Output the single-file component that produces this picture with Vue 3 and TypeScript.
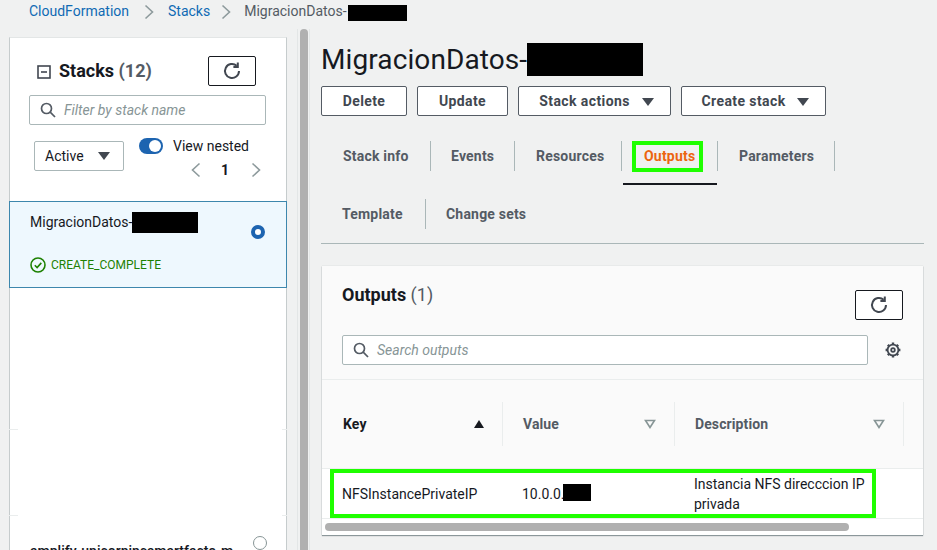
<script setup lang="ts">
const tabsTop = [
  { name: 'Stack info', w: 110, pad: 22 },
  { name: 'Events', w: 84, pad: 20 },
  { name: 'Resources', w: 107, pad: 21 },
  { name: 'Outputs', w: 96, pad: 22, active: true },
  { name: 'Parameters', w: 117, pad: 21 },
]
const tabsBottom = [
  { name: 'Template', w: 105, pad: 21 },
  { name: 'Change sets', w: 110, pad: 20, last: true },
]
</script>

<template>
  <div class="page">
    <nav class="crumbs">
      <a>CloudFormation</a>
      <svg class="chev" viewBox="0 0 10 16"><path d="M1.5 1.5 8.5 8l-7 6.500" /></svg>
      <a>Stacks</a>
      <svg class="chev chev-two" viewBox="0 0 10 16"><path d="M1.500 1.500 8.500 8l-7 6.500" /></svg>
      <span class="crumb-now">MigracionDatos-</span><i class="redact crumb-redact"></i>
    </nav>

    <div class="main">
      <aside class="side">
        <div class="side-head">
          <svg class="collapse" viewBox="0 0 14 14"><rect x="1" y="1" width="12" height="12" /><path d="M4 7h6" /></svg>
          <h2>Stacks <span>(12)</span></h2>
          <button class="icon-btn side-refresh" type="button">
            <svg viewBox="0 0 20 20"><path d="M17 10a7 7 0 1 1-2.300-5.200" /><path d="M15.800 1.500v4.400h-4.400" /></svg>
          </button>
        </div>
        <div class="field side-filter">
          <svg class="lens" viewBox="0 0 16 16"><circle cx="6.500" cy="6.500" r="5" /><path d="m10.200 10.200 4.800 4.800" /></svg>
          <em>Filter by stack name</em>
        </div>
        <div class="side-controls">
          <div class="select">Active <b class="caret"></b></div>
          <div class="nested">
            <div class="nested-row">
              <span class="toggle"><span></span></span>
              <span>View nested</span>
            </div>
            <div class="pager">
              <svg viewBox="0 0 10 16"><path d="M8.500 1.500 1.500 8l7 6.500" /></svg>
              <strong>1</strong>
              <svg viewBox="0 0 10 16"><path d="M1.500 1.500 8.500 8l-7 6.500" /></svg>
            </div>
          </div>
        </div>
        <div class="stack-item">
          <div class="stack-name">MigracionDatos-<i class="redact item-redact"></i></div>
          <div class="stack-status">
            <svg viewBox="0 0 16 16"><circle cx="8" cy="8" r="7" /><path d="m4.800 8.200 2.300 2.300 4.200-4.600" /></svg>
            CREATE_COMPLETE
          </div>
          <span class="radio-on"></span>
        </div>
        <div class="empty-row"></div>
        <div class="empty-row short"></div>
        <div class="stack-next">
          <span>amplify-unicornincsmartfacto-m</span>
          <span class="radio-off"></span>
        </div>
      </aside>

      <div class="splitter"><div class="thumb"></div></div>

      <section class="content">
        <h1>MigracionDatos-<i class="redact title-redact"></i></h1>
        <div class="actions">
          <button class="btn b-delete" type="button">Delete</button>
          <button class="btn b-update" type="button">Update</button>
          <button class="btn b-stack" type="button">Stack actions <b class="caret"></b></button>
          <button class="btn b-create" type="button">Create stack <b class="caret"></b></button>
        </div>

        <div class="tabs">
          <div class="tab-row row-one">
            <div v-for="t in tabsTop" :key="t.name" class="tab" :class="{ active: t.active }" :style="{ width: t.w + 'px', paddingLeft: t.pad + 'px' }">
              {{ t.name }}
              <span v-if="t.active" class="mark tab-mark"></span>
            </div>
          </div>
          <div class="tab-row row-two">
            <div v-for="t in tabsBottom" :key="t.name" class="tab" :class="{ last: t.last }" :style="{ width: t.w + 'px', paddingLeft: t.pad + 'px' }">{{ t.name }}</div>
          </div>
        </div>

        <div class="card">
          <div class="card-head">
            <div class="card-title">
              <h3>Outputs <span>(1)</span></h3>
              <button class="icon-btn" type="button">
                <svg viewBox="0 0 20 20"><path d="M17 10a7 7 0 1 1-2.300-5.200" /><path d="M15.800 1.500v4.400h-4.400" /></svg>
              </button>
            </div>
            <div class="card-search">
              <div class="field">
                <svg class="lens" viewBox="0 0 16 16"><circle cx="6.500" cy="6.500" r="5" /><path d="m10.200 10.200 4.800 4.800" /></svg>
                <em>Search outputs</em>
              </div>
              <svg class="gear" viewBox="0 0 16 16">
                <circle cx="8" cy="8" r="5.400" />
                <circle cx="8" cy="8" r="1.800" />
                <path class="teeth" d="M8 .6v2M8 13.400v2M.6 8h2M13.400 8h2M2.800 2.800l1.400 1.400M11.800 11.800l1.400 1.400M2.800 13.200l1.400-1.400M11.800 4.200l1.400-1.400" />
              </svg>
            </div>
          </div>
          <div class="table">
            <div class="thead">
              <div class="th c-key">Key <b class="sort-up"></b></div>
              <div class="th c-val">Value <svg viewBox="0 0 12 10"><path d="M1.500 1.500h9L6 8.500z" /></svg></div>
              <div class="th c-desc">Description <svg viewBox="0 0 12 10"><path d="M1.500 1.500h9L6 8.500z" /></svg></div>
            </div>
            <div class="tbody">
              <div class="td t-key">NFSInstancePrivateIP</div>
              <div class="td t-val">10.0.0.<i class="redact val-redact"></i></div>
              <div class="td t-desc">Instancia NFS direcccion IP privada</div>
              <span class="mark row-mark"></span>
            </div>
            <div class="hscroll"><div></div></div>
          </div>
        </div>
      </section>
    </div>
  </div>
</template>

<style>
html, body {
  margin: 0;
  overflow: hidden;
}
</style>

<style scoped>
.page {
  width: 937px;
  height: 550px;
  overflow: hidden;
  background: #f0f1f1;
  font-family: Roboto, "Liberation Sans", sans-serif;
  font-size: 14px;
  color: #16191f;
}
.redact {
  display: inline-block;
  background: #000;
  vertical-align: middle;
}
.crumbs {
  height: 37px;
  box-sizing: border-box;
  padding: 2px 0 0 29px;
  display: flex;
  align-items: flex-start;
  line-height: 19px;
}
.crumbs a {
  color: #0f6ab4;
}
.chev {
  width: 10px;
  height: 16px;
  margin: 2px 14px 0 15px;
  fill: none;
  stroke: #8d9a9c;
  stroke-width: 1.600;
}
.chev-two {
  margin: 2px 13px 0 11px;
}
.crumb-now {
  color: #545b64;
}
.crumb-redact {
  width: 59px;
  height: 16px;
  margin: 3px 0 0 1px;
}
.main {
  display: flex;
  height: 513px;
}
.side {
  width: 278px;
  margin-left: 9px;
  box-sizing: border-box;
  background: #fff;
  border-left: 1px solid #c6cccd;
  border-right: 1px solid #c6cccd;
  border-top: 1px solid #e3e6e6;
  flex: none;
}
.side-head {
  display: flex;
  align-items: center;
  height: 29px;
  margin-top: 18px;
  padding-left: 27px;
}
.collapse {
  width: 14px;
  height: 14px;
  margin-top: 2px;
  fill: none;
  stroke: #414750;
  stroke-width: 1.600;
}
.side-head h2 {
  margin: 0 0 0 8px;
  width: 149px;
  font-size: 18px;
  font-weight: 700;
  line-height: 24px;
}
.side-head h2 span,
.card-title h3 span {
  color: #545b64;
}
.icon-btn {
  width: 48px;
  height: 30px;
  padding: 0;
  background: #fff;
  border: 1px solid #16191f;
  border-radius: 2px;
  display: flex;
  align-items: center;
  justify-content: center;
}
.icon-btn svg {
  width: 20px;
  height: 20px;
  fill: none;
  stroke: #414750;
  stroke-width: 2;
}
.field {
  height: 30px;
  box-sizing: border-box;
  background: #fff;
  border: 1px solid #aab7b8;
  border-radius: 2px;
  display: flex;
  align-items: center;
  padding-left: 10px;
  color: #879596;
}
.field em {
  margin-left: 8px;
  font-size: 14px;
}
.lens {
  width: 16px;
  height: 16px;
  fill: none;
  stroke: #545b64;
  stroke-width: 1.700;
  flex: none;
}
.side-filter {
  width: 237px;
  margin: 10px 0 0 19px;
}
.side-controls {
  display: flex;
  height: 76px;
  padding-left: 24px;
}
.select {
  width: 90px;
  height: 30px;
  box-sizing: border-box;
  margin-top: 16px;
  background: #fff;
  border: 1px solid #aab7b8;
  border-radius: 2px;
  display: flex;
  align-items: center;
  padding-left: 10px;
  gap: 14px;
}
.caret {
  display: inline-block;
  width: 0;
  height: 0;
  border-left: 6px solid transparent;
  border-right: 6px solid transparent;
  border-top: 8px solid #414750;
}
.nested {
  margin: 13px 0 0 15px;
}
.nested-row {
  display: flex;
  align-items: flex-start;
  gap: 10px;
  line-height: 16px;
  height: 24px;
}
.toggle {
  width: 24px;
  height: 16px;
  border-radius: 8px;
  background: #1d64b0;
  position: relative;
}
.toggle span {
  position: absolute;
  top: 2px;
  right: 2px;
  width: 12px;
  height: 12px;
  border-radius: 50%;
  background: #fff;
}
.pager {
  display: flex;
  align-items: center;
  margin-left: 52px;
  gap: 21px;
  height: 16px;
}
.pager svg {
  width: 10px;
  height: 16px;
  fill: none;
  stroke: #8d9a9c;
  stroke-width: 1.600;
}
.pager strong {
  font-size: 14px;
  margin: 0 1px 0 -1px;
}
.stack-item {
  position: relative;
  height: 87px;
  box-sizing: border-box;
  margin: 0 -1px;
  border: 1px solid #3d87ad;
  background: #eef8fe;
  padding: 10px 0 0 20px;
}
.stack-name {
  line-height: 21px;
  height: 21px;
  display: flex;
}
.item-redact {
  width: 66px;
  height: 21px;
}
.stack-status {
  display: flex;
  align-items: center;
  gap: 5px;
  margin-top: 24px;
  color: #1d8102;
  font-size: 12px;
  line-height: 16px;
}
.stack-status svg {
  width: 16px;
  height: 16px;
  fill: none;
  stroke: #1d8102;
  stroke-width: 1.600;
}
.radio-on {
  position: absolute;
  right: 21px;
  top: 23px;
  width: 6px;
  height: 6px;
  border: 4px solid #1d64b0;
  border-radius: 50%;
  background: #fff;
}
.empty-row {
  height: 141px;
  margin: 0 -1px;
  position: relative;
  border-bottom: 1px solid #eaeded;
  border-image: linear-gradient(to right, #eaeded 10px, transparent 10px, transparent calc(100% - 6px), #eaeded calc(100% - 6px)) 1;
}
.empty-row.short {
  height: 85px;
}
.stack-next {
  display: flex;
  justify-content: space-between;
  padding: 26px 19px 0 20px;
  font-weight: 500;
  line-height: 18px;
}
.radio-off {
  width: 12px;
  height: 12px;
  margin-top: -6px;
  border: 1px solid #879596;
  border-radius: 50%;
  background: #fff;
}
.splitter {
  width: 13px;
  margin-left: 10px;
  margin-top: -8px;
  border-left: 1px solid #e3e6e6;
  border-right: 1px solid #e3e6e6;
  box-sizing: border-box;
  flex: none;
  padding-left: 2px;
}
.thumb {
  width: 8px;
  height: 100%;
  border-radius: 4px 4px 0 0;
  background: #b0b0b0;
}
.content {
  flex: 1;
  min-width: 0;
  padding-left: 11px;
}
h1 {
  margin: 6px 0 0;
  display: flex;
  font-size: 28px;
  font-weight: 400;
  line-height: 33px;
  letter-spacing: 0.100px;
}
.title-redact {
  width: 116px;
  height: 33px;
}
.actions {
  display: flex;
  gap: 10px;
  margin-top: 10px;
}
.btn {
  height: 30px;
  padding: 0;
  box-sizing: border-box;
  background: #fff;
  border: 1px solid #545b64;
  border-radius: 2px;
  color: #414750;
  font: 700 14px Roboto, "Liberation Sans", sans-serif;
  letter-spacing: 0.400px;
}
.btn .caret {
  margin: 0 -4px 0 8px;
}
.b-delete { width: 86px; }
.b-update { width: 91px; }
.b-stack { width: 153px; }
.b-create { width: 145px; }
.tabs {
  width: 603px;
  height: 102px;
  margin-top: 25px;
  border-bottom: 1px solid #aab7b8;
  position: relative;
}
.tab-row {
  display: flex;
}
.row-two {
  margin-top: 28px;
}
.tab {
  position: relative;
  height: 30px;
  line-height: 30px;
  box-sizing: border-box;
  font-weight: 700;
  color: #545b64;
  border-right: 1px solid #aab7b8;
  flex: none;
  letter-spacing: 0.200px;
}
.tab.last {
  border-right: 0;
}
.tab.active {
  color: #ec6510;
}
.tab.active::after {
  content: "";
  position: absolute;
  left: 1px;
  right: 0;
  bottom: -14px;
  height: 2px;
  background: #16191f;
}
.mark {
  position: absolute;
  box-sizing: border-box;
  border: 4px solid #1fff00;
}
.tab-mark {
  left: 10px;
  top: 0;
  width: 71px;
  height: 31px;
}
.card {
  width: 601px;
  height: 269px;
  margin: 22px 0 0 1px;
  background: #fafafa;
  box-shadow: 0 1px 1px rgba(0, 28, 36, 0.4), 0 0 1px rgba(0, 28, 36, 0.2);
  overflow: hidden;
}
.card-head {
  height: 114px;
  box-sizing: border-box;
  padding: 17px 20px 0;
  border-bottom: 1px solid #eaeded;
}
.card-title {
  display: flex;
  justify-content: space-between;
  height: 33px;
}
.card-title h3 {
  margin: 0;
  font-size: 18px;
  line-height: 24px;
  font-weight: 700;
}
.card-title span {
  font-weight: 400;
}
.card-title .icon-btn {
  margin-top: 7px;
}
.card-search {
  display: flex;
  align-items: center;
  margin-top: 19px;
}
.card-search .field {
  width: 526px;
}
.gear {
  width: 16px;
  height: 16px;
  margin-left: 17px;
  fill: none;
  stroke: #414750;
  stroke-width: 1.800;
}
.gear .teeth {
  stroke-width: 2.400;
}
.table {
  position: relative;
}
.thead {
  display: flex;
  height: 89px;
  box-sizing: border-box;
  padding-top: 22px;
  border-bottom: 1px solid #eaeded;
}
.th {
  height: 44px;
  box-sizing: border-box;
  border-right: 1px solid #eaeded;
  display: flex;
  align-items: center;
  justify-content: space-between;
  font-weight: 700;
  color: #545b64;
  padding-right: 19px;
  flex: none;
  letter-spacing: 0.100px;
}
.th svg {
  width: 12px;
  height: 10px;
  fill: none;
  stroke: #879596;
  stroke-width: 1.600;
}
.c-key {
  width: 181px;
  padding-left: 21px;
  padding-right: 18px;
  color: #16191f;
}
.c-val {
  width: 172px;
  padding-left: 20px;
  padding-right: 18px;
}
.c-desc {
  width: 229px;
  padding-left: 20px;
  padding-right: 18px;
}
.sort-up {
  width: 0;
  height: 0;
  border-left: 5px solid transparent;
  border-right: 5px solid transparent;
  border-bottom: 8px solid #16191f;
}
.tbody {
  position: relative;
  display: flex;
  height: 50px;
  background: #fff;
  align-items: center;
  border-bottom: 1px solid #eaeded;
  box-sizing: border-box;
}
.td {
  flex: none;
  line-height: 20px;
}
.t-key {
  width: 180px;
  padding-left: 20px;
  box-sizing: border-box;
}
.t-val {
  width: 172px;
  padding-left: 20px;
  box-sizing: border-box;
  display: flex;
}
.val-redact {
  width: 28px;
  height: 17px;
  margin-left: -2px;
}
.t-desc {
  padding-left: 20px;
  width: 172px;
}
.row-mark {
  left: 8px;
  top: 0;
  width: 546px;
  height: 49px;
}
.hscroll {
  background: #fff;
  height: 16px;
  padding: 4px 0 0 3px;
  box-sizing: border-box;
}
.hscroll div {
  width: 524px;
  height: 8px;
  border-radius: 4px;
  background: #b0b0b0;
}
</style>
